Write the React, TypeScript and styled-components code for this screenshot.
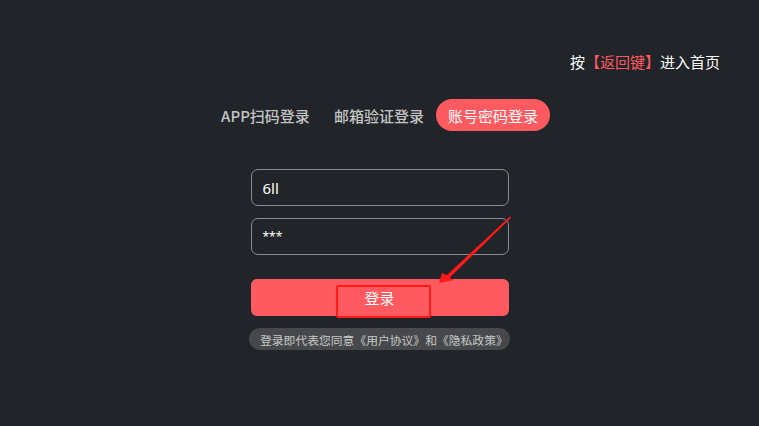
import styled, { createGlobalStyle } from "styled-components";

const GlobalStyle = createGlobalStyle`
  html, body {
    margin: 0;
    padding: 0;
    background: #212428;
  }
  * {
    box-sizing: border-box;
  }
`;

const FONT = `"Noto Sans CJK SC", "Noto Sans", sans-serif`;

const tabs = ["APP扫码登录", "邮箱验证登录", "账号密码登录"];

export default function App() {
  const activeTab = 2;

  return (
    <>
      <GlobalStyle />
      <StPage>
        <StHint>
          按<StHintKey>【返回键】</StHintKey>进入首页
        </StHint>

        <StTabs>
          {tabs.map((tab, i) => (
            <StTab key={tab} $active={i === activeTab}>
              {tab}
            </StTab>
          ))}
        </StTabs>

        <StForm>
          <StInput>6ll</StInput>
          <StInput $small>***</StInput>
          <StLoginButton>
            登录
            <StMarkBox />
          </StLoginButton>
          <StAgreement>登录即代表您同意《用户协议》和《隐私政策》</StAgreement>

          <StArrow viewBox="0 0 258 181" width="258" height="181">
            <path
              d="M259 47.4 L260.2 48.6 L198.6 108.8 L203 111 L188 114 L191 104 L195.8 106.2 Z"
              fill="#ff1a1a"
            />
          </StArrow>
        </StForm>
      </StPage>
    </>
  );
}

const StPage = styled.div`
  width: 759px;
  height: 426px;
  background: #212428;
  padding: 52px 39px 0;
  display: flex;
  flex-direction: column;
  align-items: center;
  font-family: ${FONT};
`;

const StHint = styled.div`
  align-self: flex-end;
  font-size: 15px;
  line-height: 20px;
  color: #ffffff;
`;

const StHintKey = styled.span`
  color: #ff5a5f;
`;

const StTabs = styled.div`
  display: flex;
  margin-top: 27px;
`;

const StTab = styled.div<{ $active?: boolean }>`
  height: 32px;
  padding: 0 12px;
  display: flex;
  align-items: center;
  border-radius: 16px;
  font-size: 15px;
  font-weight: ${({ $active }) => ($active ? 400 : 500)};
  color: ${({ $active }) => ($active ? "#ffffff" : "#c4c4c4")};
  background: ${({ $active }) => ($active ? "#ff5a5f" : "transparent")};
`;

const StForm = styled.div`
  position: relative;
  width: 258px;
  margin-top: 38px;
  display: flex;
  flex-direction: column;
`;

const StInput = styled.div<{ $small?: boolean }>`
  height: 37px;
  margin-bottom: 12px;
  padding: 0 11px;
  display: flex;
  align-items: center;
  border: 1px solid #8a8c8f;
  border-radius: 7px;
  color: #ffffff;
  font-family: "Noto Sans", sans-serif;
  font-size: ${({ $small }) => ($small ? "12px" : "15px")};
`;

const StLoginButton = styled.div`
  position: relative;
  height: 37px;
  margin-top: 12px;
  display: flex;
  align-items: center;
  justify-content: center;
  border-radius: 6px;
  background: #ff5a5f;
  color: #ffffff;
  font-size: 15px;
`;

const StMarkBox = styled.div`
  position: absolute;
  left: 85px;
  top: 6px;
  width: 95px;
  height: 33px;
  border: 2px solid #ff1a1a;
  border-radius: 2px;
`;

const StAgreement = styled.div`
  align-self: center;
  width: 261px;
  height: 22px;
  margin-top: 12px;
  padding-left: 11px;
  display: flex;
  align-items: center;
  border-radius: 11px;
  background: #46484b;
  color: #c8c8c8;
  font-size: 11.8px;
  white-space: nowrap;
`;

const StArrow = styled.svg`
  position: absolute;
  left: 0;
  top: 0;
  overflow: visible;
  pointer-events: none;
`;
